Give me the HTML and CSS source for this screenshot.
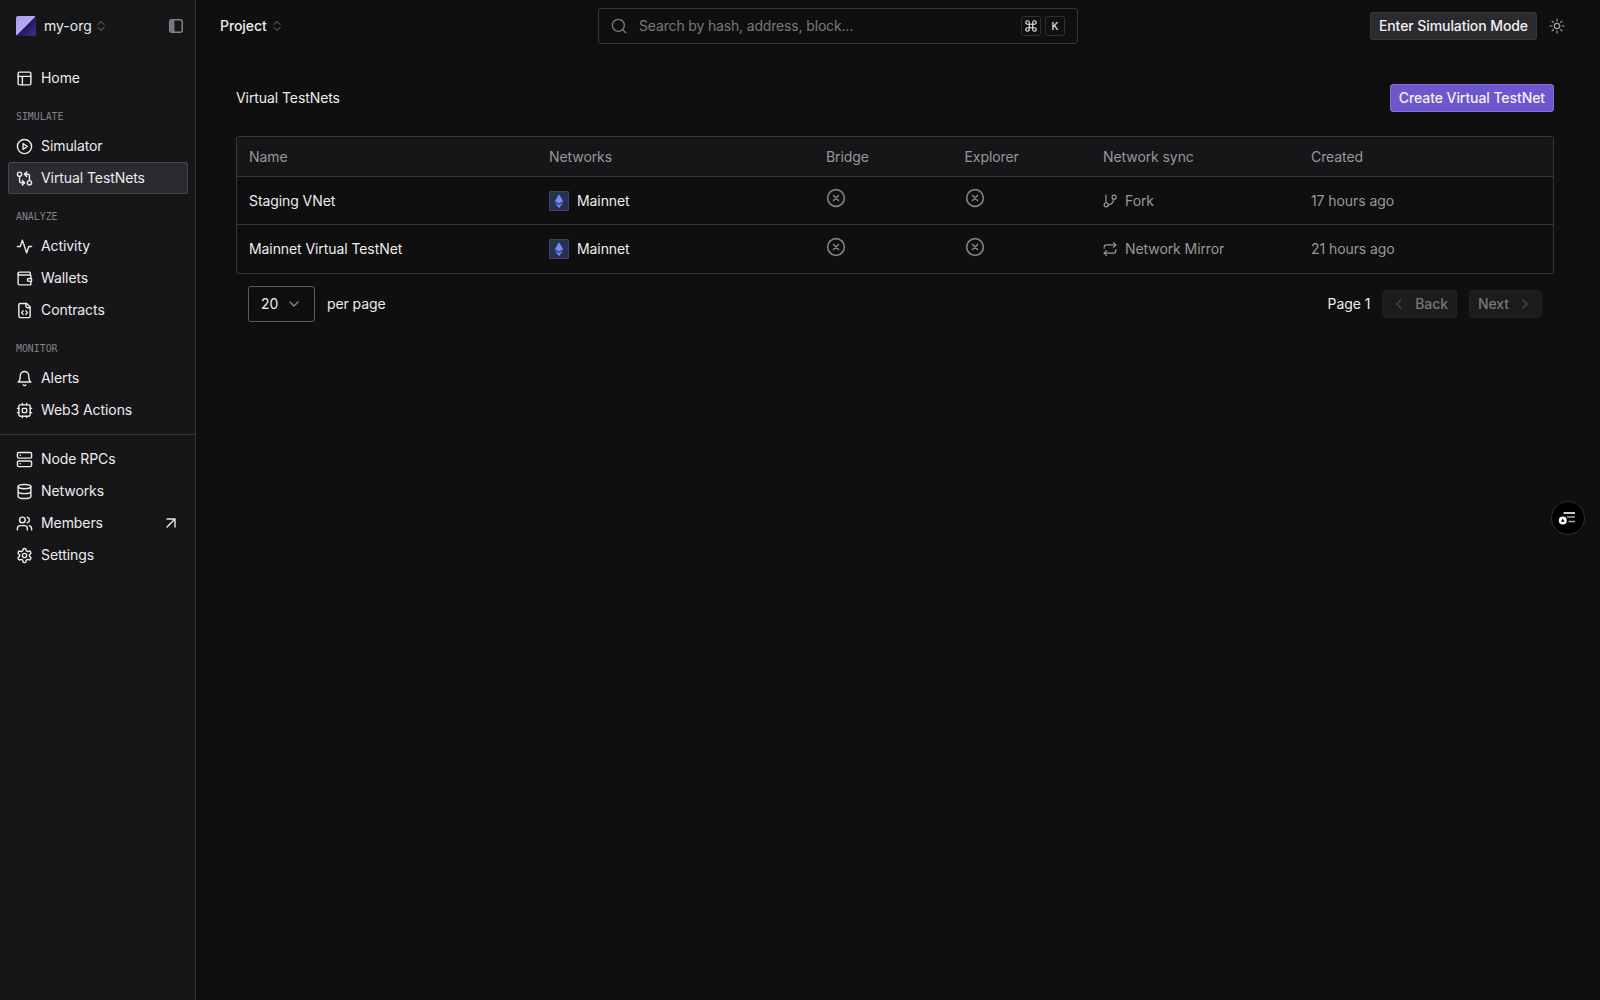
FILE: index.html
```html
<!DOCTYPE html>
<html lang="en">
<head>
<meta charset="utf-8">
<title>Virtual TestNets</title>
<link rel="stylesheet" href="styles.css">
</head>
<body>
<svg class="sprite" aria-hidden="true">
  <symbol id="updown" viewBox="0 0 24 24"><path d="m6 9 6-6 6 6M6 15l6 6 6-6"/></symbol>
  <symbol id="xcircle" viewBox="0 0 24 24"><circle cx="12" cy="12" r="10"/><path d="m15 9-6 6M9 9l6 6"/></symbol>
  <symbol id="ether" viewBox="0 0 18 18"><path d="M9 2.200 13.200 9.200 9 11.700 4.800 9.200zM4.800 10.400 9 12.900l4.200-2.500L9 16.200z"/></symbol>
</svg>
<div class="app">
  <aside class="sidebar">
    <div class="org">
      <span class="org-logo"></span>
      <span class="org-name">my-org</span>
      <svg class="icon updown"><use href="#updown"/></svg>
      <svg class="collapse" viewBox="0 0 14 14"><rect x=".75" y=".75" width="12.5" height="12.5" rx="2"/><path class="fill" d="M1 1h4.500v12H1z"/></svg>
    </div>
    <nav class="nav">
      <a class="item"><svg class="icon" viewBox="0 0 24 24"><rect x="3" y="3" width="18" height="18" rx="2"/><path d="M3 9h18M9 21V9"/></svg>Home</a>
      <h2 class="label"><span>SIMULATE</span></h2>
      <a class="item"><svg class="icon" viewBox="0 0 24 24"><circle cx="12" cy="12" r="10"/><path d="m10 8 6 4-6 4z"/></svg>Simulator</a>
      <a class="item active"><svg class="icon" viewBox="0 0 24 24"><circle cx="5" cy="6" r="3"/><path d="M12 6h5a2 2 0 0 1 2 2v7"/><path d="m15 9-3-3 3-3"/><circle cx="19" cy="18" r="3"/><path d="M12 18H7a2 2 0 0 1-2-2V9"/><path d="m9 15 3 3-3 3"/></svg>Virtual TestNets</a>
      <h2 class="label"><span>ANALYZE</span></h2>
      <a class="item"><svg class="icon" viewBox="0 0 24 24"><path d="M22 12h-4l-3 9L9 3l-3 9H2"/></svg>Activity</a>
      <a class="item"><svg class="icon" viewBox="0 0 24 24"><path d="M20 7V4a1 1 0 0 0-1-1H5a2 2 0 0 0 0 4h15a1 1 0 0 1 1 1v4h-3a2 2 0 0 0 0 4h3a1 1 0 0 0 1-1v-2a1 1 0 0 0-1-1"/><path d="M3 5v14a2 2 0 0 0 2 2h15a1 1 0 0 0 1-1v-4"/></svg>Wallets</a>
      <a class="item"><svg class="icon" viewBox="0 0 24 24"><path d="M15 2H6a2 2 0 0 0-2 2v16a2 2 0 0 0 2 2h12a2 2 0 0 0 2-2V7z"/><path d="M14 2v4a2 2 0 0 0 2 2h4M10 12.500 8 15l2 2.500M14 12.500l2 2.500-2 2.500"/></svg>Contracts</a>
      <h2 class="label"><span>MONITOR</span></h2>
      <a class="item"><svg class="icon" viewBox="0 0 24 24"><path d="M6 8a6 6 0 0 1 12 0c0 7 3 9 3 9H3s3-2 3-9M10.300 21a1.940 1.940 0 0 0 3.400 0"/></svg>Alerts</a>
      <a class="item"><svg class="icon" viewBox="0 0 24 24"><rect x="4" y="4" width="16" height="16" rx="2"/><rect x="9" y="9" width="6" height="6" rx="1"/><path d="M15 2v2M15 20v2M2 15h2M2 9h2M20 15h2M20 9h2M9 2v2M9 20v2"/></svg>Web3 Actions</a>
    </nav>
    <nav class="nav secondary">
      <a class="item"><svg class="icon" viewBox="0 0 24 24"><rect x="2" y="2" width="20" height="8" rx="2"/><rect x="2" y="14" width="20" height="8" rx="2"/><path d="M6 6h.01M6 18h.01"/></svg>Node RPCs</a>
      <a class="item"><svg class="icon" viewBox="0 0 24 24"><ellipse cx="12" cy="5" rx="9" ry="3"/><path d="M3 5v14a9 3 0 0 0 18 0V5M3 12a9 3 0 0 0 18 0"/></svg>Networks</a>
      <a class="item"><svg class="icon" viewBox="0 0 24 24"><path d="M16 21v-2a4 4 0 0 0-4-4H6a4 4 0 0 0-4 4v2"/><circle cx="9" cy="7" r="4"/><path d="M22 21v-2a4 4 0 0 0-3-3.870M16 3.130a4 4 0 0 1 0 7.750"/></svg>Members<svg class="icon external" viewBox="0 0 24 24"><path d="M6 18 18 6M6 6h12v12"/></svg></a>
      <a class="item"><svg class="icon" viewBox="0 0 24 24"><path d="M12.220 2h-.44a2 2 0 0 0-2 2v.18a2 2 0 0 1-1 1.730l-.43.25a2 2 0 0 1-2 0l-.15-.08a2 2 0 0 0-2.730.73l-.22.38a2 2 0 0 0 .73 2.730l.15.1a2 2 0 0 1 1 1.720v.51a2 2 0 0 1-1 1.740l-.15.09a2 2 0 0 0-.73 2.730l.22.38a2 2 0 0 0 2.730.73l.15-.08a2 2 0 0 1 2 0l.43.25a2 2 0 0 1 1 1.730V20a2 2 0 0 0 2 2h.44a2 2 0 0 0 2-2v-.18a2 2 0 0 1 1-1.730l.43-.25a2 2 0 0 1 2 0l.15.08a2 2 0 0 0 2.730-.73l.22-.39a2 2 0 0 0-.73-2.730l-.15-.08a2 2 0 0 1-1-1.740v-.5a2 2 0 0 1 1-1.740l.15-.09a2 2 0 0 0 .73-2.730l-.22-.38a2 2 0 0 0-2.730-.73l-.15.08a2 2 0 0 1-2 0l-.43-.25a2 2 0 0 1-1-1.730V4a2 2 0 0 0-2-2z"/><circle cx="12" cy="12" r="3"/></svg>Settings</a>
    </nav>
  </aside>
  <div class="main">
    <header class="topbar">
      <div class="project">Project<svg class="icon updown"><use href="#updown"/></svg></div>
      <div class="search">
        <svg class="icon" viewBox="0 0 24 24"><circle cx="11" cy="11" r="9"/><path d="m22 22-4.500-4.500"/></svg>
        <span class="placeholder">Search by hash, address, block...</span>
        <kbd><svg class="icon" viewBox="0 0 24 24"><path d="M15 6v12a3 3 0 1 0 3-3H6a3 3 0 1 0 3 3V6a3 3 0 1 0-3 3h12a3 3 0 1 0-3-3"/></svg></kbd>
        <kbd>K</kbd>
      </div>
      <div class="actions">
        <button class="btn dark">Enter Simulation Mode</button>
        <svg class="icon sun" viewBox="0 0 24 24"><circle cx="12" cy="12" r="4"/><path d="M12 1.500v3M12 19.500v3M4.600 4.600l2 2M17.400 17.400l2 2M1.500 12h3M19.500 12h3M6.600 17.400l-2 2M19.400 4.600l-2 2"/></svg>
      </div>
    </header>
    <main class="content">
      <div class="heading">
        <h1>Virtual TestNets</h1>
        <button class="btn primary">Create Virtual TestNet</button>
      </div>
      <div class="table">
        <div class="row head"><span>Name</span><span>Networks</span><span>Bridge</span><span>Explorer</span><span>Network sync</span><span>Created</span></div>
        <div class="row">
          <span>Staging VNet</span>
          <span class="cell"><svg class="eth"><use href="#ether"/></svg>Mainnet</span>
          <svg class="icon off"><use href="#xcircle"/></svg>
          <svg class="icon off"><use href="#xcircle"/></svg>
          <span class="cell muted"><svg class="icon sync" viewBox="0 0 24 24"><path d="M5 2v13M18 9a9 9 0 0 1-9.500 9.500"/><circle cx="19" cy="5.500" r="3.500"/><circle cx="5.500" cy="18.500" r="3.500"/></svg>Fork</span>
          <span class="muted">17 hours ago</span>
        </div>
        <div class="row last">
          <span>Mainnet Virtual TestNet</span>
          <span class="cell"><svg class="eth"><use href="#ether"/></svg>Mainnet</span>
          <svg class="icon off"><use href="#xcircle"/></svg>
          <svg class="icon off"><use href="#xcircle"/></svg>
          <span class="cell muted"><svg class="icon sync" viewBox="0 0 24 24"><path d="m18 1 4 4-4 4"/><path d="M2 11V9a4 4 0 0 1 4-4h16M6 23l-4-4 4-4"/><path d="M22 13v2a4 4 0 0 1-4 4H2"/></svg>Network Mirror</span>
          <span class="muted">21 hours ago</span>
        </div>
      </div>
      <footer class="pager">
        <div class="select">20<svg class="icon" viewBox="0 0 24 24"><path d="m6 9 6 6 6-6"/></svg></div>
        <span class="per">per page</span>
        <span class="page">Page 1</span>
        <button class="btn step back"><svg class="icon" viewBox="0 0 24 24"><path d="m15 18-6-6 6-6"/></svg>Back</button>
        <button class="btn step next">Next<svg class="icon" viewBox="0 0 24 24"><path d="m9 18 6-6-6-6"/></svg></button>
      </footer>
    </main>
  </div>
</div>
<div class="assist"><svg viewBox="0 0 18 14"><path class="bar a" d="M5.500 2H17"/><path class="bar" d="M9 6h8M10.500 10.500H17"/><circle cx="4.800" cy="9.500" r="4"/><path class="mark" d="m4.800 7.500 1.800 3.200H3z"/></svg></div>
</body>
</html>
```
FILE: styles.css
```css
* { box-sizing: border-box; }
body {
  margin: 0;
  background: #0f0f0f;
  color: #ececee;
  font: 400 14px/20px Inter, "Liberation Sans", sans-serif;
  letter-spacing: -.08px;
}
.sprite { display: none; }
.app { display: flex; height: 1000px; }
.icon {
  width: 17px;
  height: 17px;
  flex: none;
  fill: none;
  stroke: currentColor;
  stroke-width: 2;
  stroke-linecap: round;
  stroke-linejoin: round;
}
.icon.updown { width: 12px; height: 12px; stroke: #77777c; }

/* Sidebar */
.sidebar {
  width: 196px;
  flex: none;
  background: #161618;
  border-right: 1px solid #343438;
}
.org { display: flex; align-items: center; height: 52px; padding: 0 12px 0 16px; }
.org-logo {
  width: 20px;
  height: 20px;
  border-radius: 2px;
  background:
    linear-gradient(135deg, #a99aec 0, #b8adf0 49%, #25175e 51%, #46309c 100%);
}
.org-name { margin: 0 3px 0 8px; letter-spacing: 0; }
.collapse { width: 14px; height: 14px; margin-left: auto; fill: none; stroke: #828287; stroke-width: 1.5; }
.collapse .fill { fill: #77777c; stroke: none; }
.nav { display: flex; flex-direction: column; padding: 10px 7px 8px 8px; }
.nav.secondary { border-top: 1px solid #343438; padding-top: 8px; }
.item {
  display: flex;
  align-items: center;
  gap: 8px;
  height: 32px;
  padding: 0 7px;
  border: 1px solid transparent;
  border-radius: 2px;
}
.item.active { background: #2b2b2f; border-color: #48484c; }
.item .external { width: 16px; height: 16px; margin-left: auto; margin-right: 1px; }
.label {
  height: 36px;
  margin: 0;
  padding: 13px 8px 0;
  color: #828287;
  font: 400 11px/20px "DejaVu Sans Mono", monospace;
  letter-spacing: 0;
}
.label span { display: inline-block; transform: scaleX(.895); transform-origin: left; }

/* Top bar */
.main { flex: 1; display: flex; flex-direction: column; min-width: 0; }
.topbar {
  display: grid;
  grid-template-columns: 378px 480px 1fr;
  align-items: center;
  height: 52px;
  padding: 0 35px 0 24px;
}
.project { display: flex; align-items: center; gap: 4px; font-weight: 500; }
.search {
  display: flex;
  align-items: center;
  gap: 4px;
  height: 36px;
  padding: 0 12px;
  border: 1px solid #38383c;
  border-radius: 3px;
  color: #77777c;
}
.search > .icon { width: 16px; height: 16px; }
.placeholder { flex: 1; margin-left: 8px; letter-spacing: -.16px; }
kbd {
  display: grid;
  place-items: center;
  width: 20px;
  height: 20px;
  border: 1px solid #303033;
  border-radius: 3px;
  color: #e4e4e7;
  font: 500 10px/18px Inter, sans-serif;
}
kbd .icon { width: 14px; height: 14px; }
.actions { display: flex; align-items: center; justify-content: flex-end; gap: 12px; }
.sun { width: 16px; height: 16px; stroke: #a1a1a6; stroke-width: 1.8; }
.btn {
  height: 28px;
  padding: 0 8px;
  border: 1px solid;
  border-radius: 3px;
  color: #f1f1f3;
  font: 500 14px/20px Inter, sans-serif;
  letter-spacing: -.08px;
  white-space: nowrap;
}
.dark { background: #2b2b2f; border-color: #38383c; }
.primary { background: #6e56cf; border-color: #8470d8; }

/* Content */
.content { padding: 32px 46px 0 40px; }
.heading { display: flex; align-items: center; justify-content: space-between; height: 28px; margin-bottom: 24px; }
h1 { margin: 0; font: inherit; }
.table { border: 1px solid #38383c; border-radius: 3px; overflow: hidden; }
.row {
  display: grid;
  grid-template-columns: 300px 277px 138.5px 138.5px 208px 1fr;
  align-items: center;
  height: 48px;
  padding-left: 12px;
  border-bottom: 1px solid #38383c;
}
.row.head { height: 40px; background: #161618; color: #97979d; }
.row.last { border-bottom: 0; }
.cell { display: flex; align-items: center; gap: 8px; }
.muted { color: #97979d; }
.eth { width: 20px; height: 20px; background: #2a304e; border: 1px solid #3a4269; border-radius: 1px; fill: #6d8cf5; }
.off { width: 20px; height: 20px; color: #7e7e84; margin-bottom: 6px; }
.last .off { margin-bottom: 5px; }
.sync { width: 14px; height: 14px; }

/* Pagination */
.pager { display: flex; align-items: center; padding: 12px 12px 0; }
.select {
  display: flex;
  align-items: center;
  justify-content: space-between;
  width: 67px;
  height: 36px;
  padding: 0 12px;
  border: 1px solid #5c5c61;
  border-radius: 3px;
}
.select .icon { width: 16px; height: 16px; stroke: #88888d; }
.per { margin-left: 12px; }
.page { margin-left: auto; }
.step { display: flex; align-items: center; gap: 8px; margin-left: 12px; background: #1c1c1e; border-color: #212123; color: #77777c; }
.step .icon { width: 16px; height: 16px; stroke: #48484c; }

/* Floating helper */
.assist {
  position: absolute;
  left: 1551px;
  top: 501px;
  display: grid;
  place-items: center;
  width: 34px;
  height: 34px;
  border: 1px solid #303033;
  border-radius: 50%;
  background: #000;
}
.assist svg { width: 18px; height: 14px; margin-right: 3px; fill: #fff; }
.assist .bar { stroke: #a8a8a8; stroke-width: 1.6; }
.assist .bar.a { stroke: #fff; }
.assist .mark { fill: #000; }
```
